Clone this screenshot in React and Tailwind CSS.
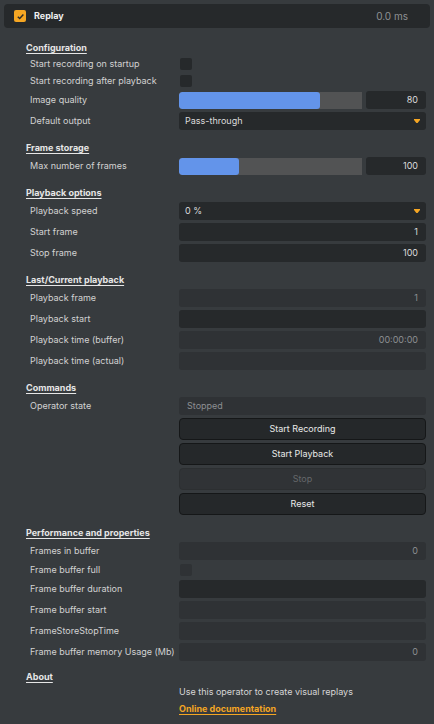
import React from "react";

const Arrow = () => (
  <svg width="6" height="4" viewBox="0 0 6 4" className="shrink-0">
    <path d="M0 0 L6 0 L6 1 L3.6 4 L2.4 4 L0 1 Z" fill="#f5a623" />
  </svg>
);

const Heading = ({ children, first }) => (
  <div
    className={`h-[11px] flex items-center pl-[22px] text-[9px] font-bold text-[#e6e6e6] underline underline-offset-[1.5px] ${
      first ? "mt-[14px]" : "mt-[12px]"
    } mb-[4px]`}
  >
    {children}
  </div>
);

const Row = ({ label, h = "h-[18px]", children }) => (
  <div className={`flex items-center ${h}`}>
    <div className="w-[175px] shrink-0 pl-[26px] text-[9px] text-[#d2d2d2] whitespace-nowrap">
      {label}
    </div>
    <div className="flex-1 h-full flex items-center">{children}</div>
  </div>
);

const Field = ({ value, dark, muted, left }) => (
  <div
    className={`w-full h-full rounded-[3px] flex items-center px-[8px] text-[9px] ${
      left ? "justify-start" : "justify-end"
    } ${dark ? "bg-[#26292b] text-[#dcdcdc]" : "bg-[#2f3235]"} ${
      muted ? "text-[#8c8f92]" : ""
    }`}
  >
    {value}
  </div>
);

const Check = ({ disabled }) => (
  <div
    className={`w-[12px] h-[12px] rounded-[2px] ml-[1px] ${
      disabled ? "bg-[#2f3235]" : "bg-[#26292b]"
    }`}
  />
);

const Slider = ({ pct, value }) => (
  <div className="w-full h-full flex items-center gap-[4px]">
    <div className="flex-1 h-[17px] bg-[#525354] rounded-l-[3px] overflow-hidden">
      <div
        className="h-full bg-[#6394ea] rounded-[3px]"
        style={{ width: `${pct}%` }}
      />
    </div>
    <div className="w-[60px] h-full rounded-[3px] bg-[#26292b] flex items-center justify-end px-[8px] text-[9px] text-[#dcdcdc]">
      {value}
    </div>
  </div>
);

const Select = ({ value }) => (
  <div className="w-full h-full rounded-[3px] bg-[#26292b] flex items-center justify-between pl-[6px] pr-[6px] text-[9px] text-[#dcdcdc]">
    <span>{value}</span>
    <Arrow />
  </div>
);

const Button = ({ children, disabled }) => (
  <div
    className={`w-full h-[22px] rounded-[4px] flex items-center justify-center text-[9px] ${
      disabled
        ? "bg-[#303336] text-[#65686b] border border-[#2c2f31]"
        : "bg-[#25282a] text-[#e8e8e8] border-[1.5px] border-[#151718]"
    }`}
  >
    {children}
  </div>
);

export default function App() {
  return (
    <div
      className="min-h-[724px] w-[434px] bg-[#373b3e] pt-[4px] px-[4px] pb-[10px]"
      style={{ fontFamily: "Inter, 'Noto Sans', sans-serif" }}
    >
      {/* header */}
      <div className="h-[24px] rounded-[4px] bg-[#26292b] flex items-center pl-[10px] pr-[22px]">
        <div className="w-[12px] h-[12px] rounded-[2px] bg-[#f5a623] flex items-center justify-center">
          <svg width="9" height="9" viewBox="0 0 10 10">
            <path
              d="M2 5.2 L4.1 7.2 L8.2 2.8"
              fill="none"
              stroke="#2a2a2a"
              strokeWidth="1.6"
            />
          </svg>
        </div>
        <span className="ml-[8px] text-[9px] font-bold text-[#f0f0f0]">
          Replay
        </span>
        <span className="ml-auto text-[10px] text-[#8e9194]">0.0 ms</span>
      </div>

      <div className="flex flex-col pr-[4px]">
        <Heading first>Configuration</Heading>
        <div className="flex flex-col gap-[3px]">
          <Row label="Start recording on startup" h="h-[14px]">
            <Check />
          </Row>
          <Row label="Start recording after playback" h="h-[14px]">
            <Check />
          </Row>
          <Row label="Image quality">
            <Slider pct={77} value="80" />
          </Row>
          <Row label="Default output">
            <Select value="Pass-through" />
          </Row>
        </div>

        <Heading>Frame storage</Heading>
        <Row label="Max number of frames">
          <Slider pct={33} value="100" />
        </Row>

        <Heading>Playback options</Heading>
        <div className="flex flex-col gap-[3px]">
          <Row label="Playback speed">
            <Select value="0 %" />
          </Row>
          <Row label="Start frame">
            <Field value="1" dark />
          </Row>
          <Row label="Stop frame">
            <Field value="100" dark />
          </Row>
        </div>

        <Heading>Last/Current playback</Heading>
        <div className="flex flex-col gap-[3px]">
          <Row label="Playback frame">
            <Field value="1" muted />
          </Row>
          <Row label="Playback start">
            <Field dark />
          </Row>
          <Row label="Playback time (buffer)">
            <Field value="00:00:00" muted />
          </Row>
          <Row label="Playback time (actual)">
            <Field />
          </Row>
        </div>

        <Heading>Commands</Heading>
        <div className="flex flex-col gap-[3px]">
          <Row label="Operator state">
            <Field value="Stopped" muted left />
          </Row>
          <div className="pl-[175px] flex flex-col gap-[3px]">
            <Button>Start Recording</Button>
            <Button>Start Playback</Button>
            <Button disabled>Stop</Button>
            <Button>Reset</Button>
          </div>
        </div>

        <Heading>Performance and properties</Heading>
        <div className="flex flex-col gap-[3px]">
          <Row label="Frames in buffer">
            <Field value="0" muted />
          </Row>
          <Row label="Frame buffer full" h="h-[14px]">
            <Check disabled />
          </Row>
          <Row label="Frame buffer duration">
            <Field dark />
          </Row>
          <Row label="Frame buffer start">
            <Field />
          </Row>
          <Row label="FrameStoreStopTime">
            <Field />
          </Row>
          <Row label="Frame buffer memory Usage (Mb)">
            <Field value="0" muted />
          </Row>
        </div>

        <div className="h-[11px] flex items-center pl-[22px] text-[9px] font-bold text-[#e6e6e6] underline underline-offset-[1.5px] mt-[10px] mb-[4px]">
          About
        </div>
        <div className="pl-[175px] text-[9px] text-[#d6d6d6] leading-[12px]">
          Use this operator to create visual replays
        </div>
        <div className="pl-[175px] mt-[5px] text-[9px] font-bold text-[#f5a623] underline underline-offset-[1.5px] leading-[12px]">
          Online documentation
        </div>
      </div>
    </div>
  );
}
